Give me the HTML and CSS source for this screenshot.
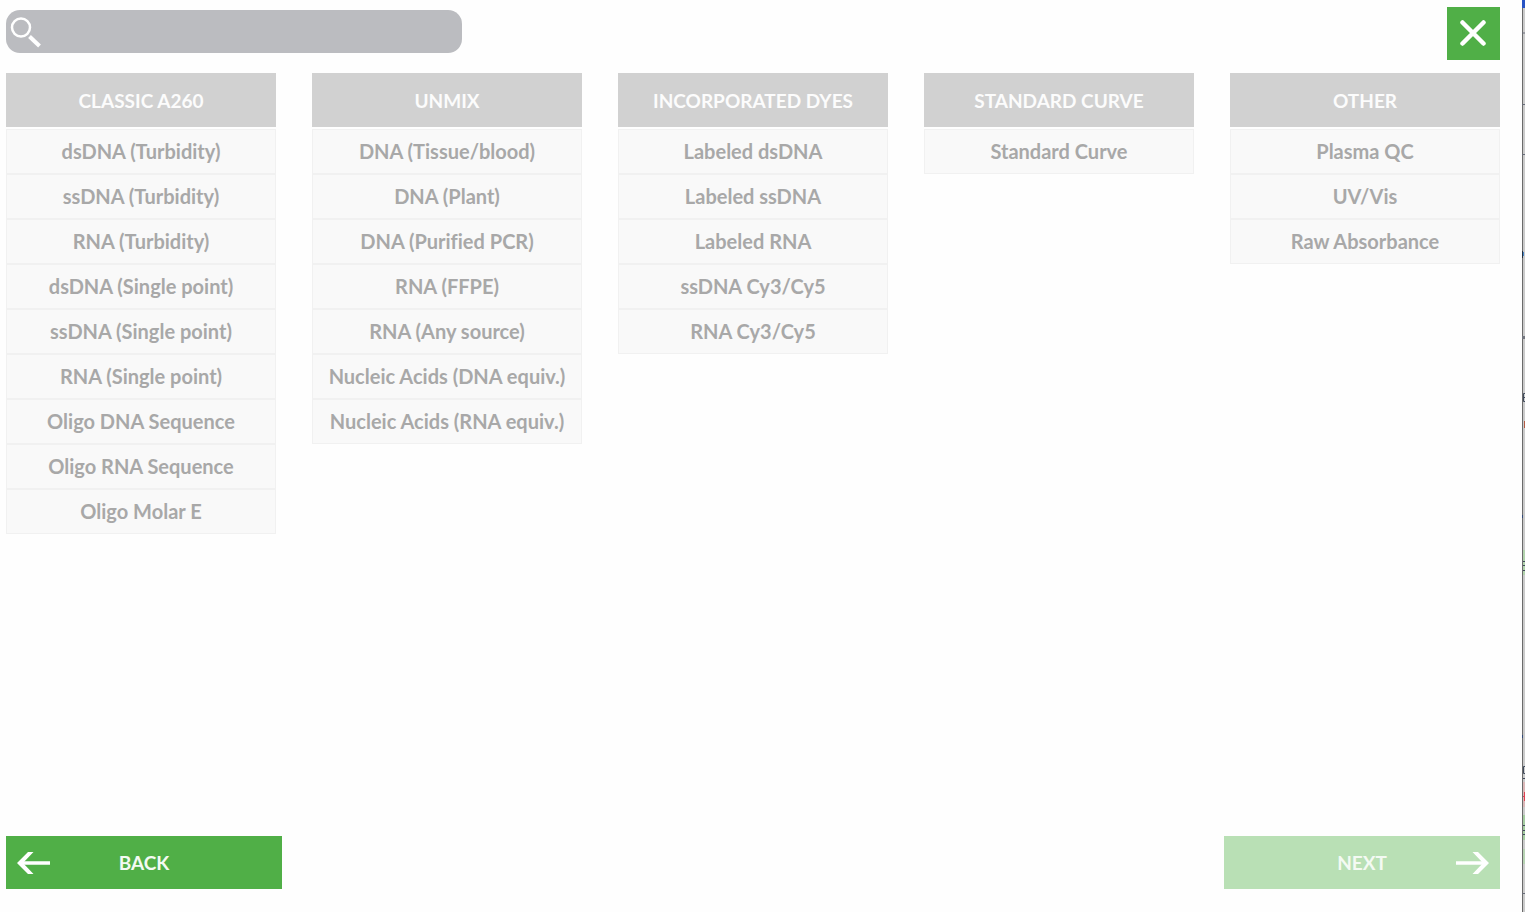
FILE: index.html
```html
<!DOCTYPE html>
<html lang="en">
<head>
    <meta charset="UTF-8">
    <meta name="viewport" content="width=device-width, initial-scale=1.0">
    <title>Applications</title>
    <link rel="stylesheet" href="styles.css">
</head>
<body>
    <main class="screen">
        <header class="topbar">
            <label class="search">
                <svg class="search-icon" width="32" height="32" viewBox="0 0 32 32" aria-hidden="true">
                    <circle cx="11" cy="11.500" r="9" fill="none" stroke="#fff" stroke-width="2.500"/>
                    <path d="M19.500 20.500L29.500 30" stroke="#fff" stroke-width="4"/>
                </svg>
                <input type="text" aria-label="Search">
            </label>
            <button class="close" aria-label="Close">
                <svg width="27" height="27" viewBox="0 0 27 27" aria-hidden="true">
                    <path d="M2.500 2.500L23.500 23.500M23.500 2.500L2.500 23.500" stroke="#fff" stroke-width="4.500" stroke-linecap="round"/>
                </svg>
            </button>
        </header>

        <div class="columns">
            <section class="column">
                <h2>CLASSIC A260</h2>
                <button>dsDNA (Turbidity)</button>
                <button>ssDNA (Turbidity)</button>
                <button>RNA (Turbidity)</button>
                <button>dsDNA (Single point)</button>
                <button>ssDNA (Single point)</button>
                <button>RNA (Single point)</button>
                <button>Oligo DNA Sequence</button>
                <button>Oligo RNA Sequence</button>
                <button>Oligo Molar E</button>
            </section>
            <section class="column">
                <h2>UNMIX</h2>
                <button>DNA (Tissue/blood)</button>
                <button>DNA (Plant)</button>
                <button>DNA (Purified PCR)</button>
                <button>RNA (FFPE)</button>
                <button>RNA (Any source)</button>
                <button>Nucleic Acids (DNA equiv.)</button>
                <button>Nucleic Acids (RNA equiv.)</button>
            </section>
            <section class="column">
                <h2>INCORPORATED DYES</h2>
                <button>Labeled dsDNA</button>
                <button>Labeled ssDNA</button>
                <button>Labeled RNA</button>
                <button>ssDNA Cy3/Cy5</button>
                <button>RNA Cy3/Cy5</button>
            </section>
            <section class="column">
                <h2>STANDARD CURVE</h2>
                <button>Standard Curve</button>
            </section>
            <section class="column">
                <h2>OTHER</h2>
                <button>Plasma QC</button>
                <button>UV/Vis</button>
                <button>Raw Absorbance</button>
            </section>
        </div>

        <footer class="actions">
            <button class="nav back">
                <svg width="34" height="24" viewBox="0 0 34 24" aria-hidden="true">
                    <path d="M16.500 1H11L0 12L11 23H16.500L6 12Z" fill="#fff"/>
                    <path d="M33 12H3" stroke="#fff" stroke-width="3.500"/>
                </svg>
                <span>BACK</span>
            </button>
            <button class="nav next" disabled>
                <span>NEXT</span>
                <svg width="34" height="24" viewBox="0 0 34 24" aria-hidden="true">
                    <path d="M17.500 1H23L34 12L23 23H17.500L28 12Z" fill="#fff"/>
                    <path d="M1 12H31" stroke="#fff" stroke-width="3.500"/>
                </svg>
            </button>
        </footer>
    </main>

    <!-- edge of the window behind -->
    <aside class="edge" aria-hidden="true">
        <svg width="3" height="912" viewBox="0 0 3 912">
            <rect width="3" height="912" fill="#cbcbcb"/>
            <rect y="550" x="1" width="2" height="25" fill="#b2d3ad"/>
            <rect y="782" x="1" width="2" height="25" fill="#dbb8b8"/>
            <rect y="815" x="1" width="2" height="25" fill="#a5cda1"/>
            <rect y="849" x="1" width="2" height="15" fill="#b7d3b3"/>
            <rect width="1" height="912" fill="#6b6b6b"/>
            <rect width="3" height="8" fill="#2853c4"/>
            <path d="M0 33H3M0 104.500H3M0 154.500H3M0 893.500H3" stroke="#686c78"/>
            <rect y="336" width="3" height="3" fill="#74777f"/>
            <rect y="251" width="1" height="7" fill="#25303d"/>
            <rect y="252" x="1" width="1" height="4" fill="#4886c9"/>
            <path d="M3 393.500H1.500V401.500H3M1 397.500H3M1 561.500H3M1 565.500H3M1 570.500H3M3 766.500H1.500V773.500H3M1 778.500H3M1 825.500H3M1 830.500H3M1 834.500H3" stroke="#414b5c" fill="none"/>
            <rect y="421" x="2" width="1" height="7" fill="#b45b43"/>
            <path d="M1 796.500H3M2.500 792V801" stroke="#e04050" fill="none"/>
            <rect y="515" width="1" height="3" fill="#304878"/>
            <rect y="735" width="1" height="3" fill="#304878"/>
        </svg>
    </aside>
</body>
</html>
```
FILE: styles.css
```css
* {
    box-sizing: border-box;
}
body {
    margin: 0;
    min-height: 100vh;
    display: flex;
    background-color: #fefefe;
    font-family: Lato, "Open Sans", sans-serif;
    font-variant-ligatures: none;
    overflow-x: hidden;
}
button, input {
    font: inherit;
}
button {
    border: none;
    cursor: pointer;
}
.screen {
    flex: 1;
    display: flex;
    flex-direction: column;
    padding: 7px 22px 23px 6px;
}
.topbar {
    display: flex;
    justify-content: space-between;
    align-items: center;
    margin-bottom: 13px;
}
.search {
    display: flex;
    align-items: center;
    width: 456px;
    height: 43px;
    margin-bottom: 4px;
    padding: 0 4px;
    background-color: #bbbcc0;
    border-radius: 14px;
}
.search input {
    flex: 1;
    border: none;
    outline: none;
    background: transparent;
    color: white;
    font-size: 20px;
}
.close {
    display: flex;
    align-items: center;
    justify-content: center;
    width: 53px;
    height: 53px;
    padding: 0;
    background-color: #50af47;
}
.columns {
    flex: 1;
    display: grid;
    grid-template-columns: repeat(5, 1fr);
    gap: 36px;
    align-items: start;
}
.column {
    display: flex;
    flex-direction: column;
}
.column h2 {
    margin: 0 0 2px;
    padding-top: 2px;
    background-color: #d1d1d1;
    color: #fcfcfc;
    font-size: 19px;
    font-weight: bold;
    line-height: 52px;
    text-align: center;
}
.column button {
    height: 45px;
    padding: 0 0 2px;
    background-color: #f9f9f9;
    border: 1px solid #f1f1f1;
    color: #a8a8a8;
    font-size: 20px;
    font-weight: bold;
    font-variant-ligatures: none;
    white-space: nowrap;
}
.actions {
    display: flex;
    justify-content: space-between;
}
.nav {
    display: grid;
    grid-template-columns: 34px 1fr 34px;
    align-items: center;
    width: 276px;
    height: 53px;
    padding: 0 11px;
    background-color: #50af47;
    color: #f4faf3;
    font-size: 19px;
    font-weight: bold;
}
.nav span {
    grid-column: 2;
}
.next {
    background-color: #b9e0b5;
    cursor: default;
}
.edge {
    width: 3px;
    display: flex;
}
```
